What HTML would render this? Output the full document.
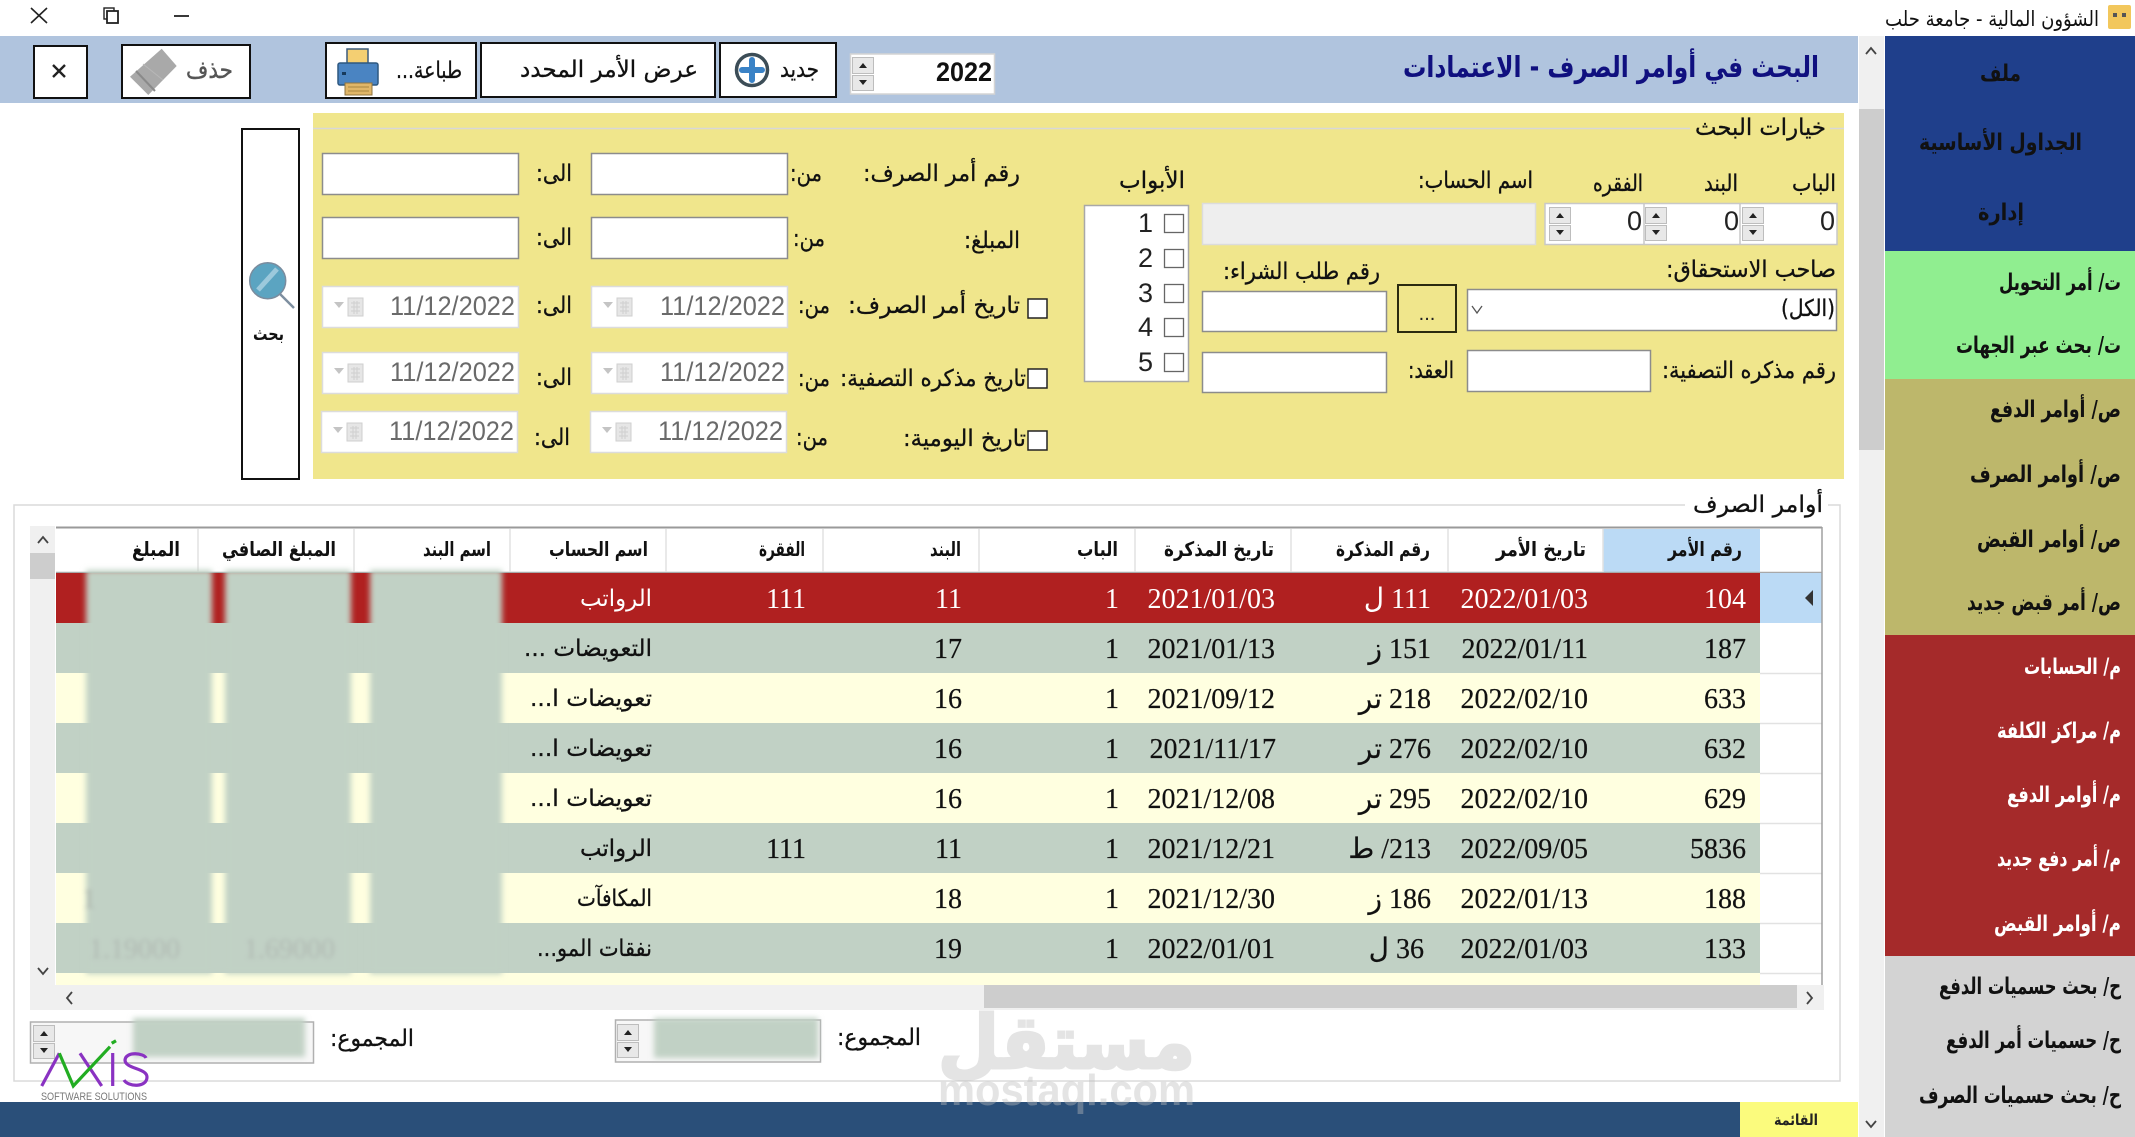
<!DOCTYPE html>
<html lang="ar">
<head>
<meta charset="utf-8">
<title>الشؤون المالية - جامعة حلب</title>
<style>
html,body{margin:0;padding:0;background:#fff;width:2135px;height:1137px;overflow:hidden}
svg{display:block;position:absolute;left:0;top:0}
text{direction:rtl;font-family:"DejaVu Sans",sans-serif;font-size:20px;fill:#111}
.h{font-weight:bold;font-size:20px;fill:#111}
.s{font-weight:bold;font-size:23px;fill:#111}
.w{font-weight:bold;font-size:22px;fill:#fff}
.n{font-family:"Liberation Serif","DejaVu Sans",serif;font-size:28px;fill:#111;stroke:#111;stroke-width:.2px}
.nw{font-family:"Liberation Serif","DejaVu Sans",serif;font-size:28px;fill:#fff}
.a{font-family:"Liberation Sans",sans-serif;font-size:27px;fill:#222}
.d{font-family:"Liberation Sans",sans-serif;font-size:27px;fill:#6a6a6a}
.c{font-size:23px;fill:#111;stroke:#111;stroke-width:.3px}
.cw{font-size:23px;fill:#fff}
</style>
</head>
<body>
<svg width="2135" height="1137" viewBox="0 0 2135 1137" xmlns="http://www.w3.org/2000/svg">
<defs>
<filter id="bl" x="-20%" y="-20%" width="140%" height="140%"><feGaussianBlur stdDeviation="3"/></filter>
<filter id="bl2" x="-20%" y="-20%" width="140%" height="140%"><feGaussianBlur stdDeviation="2"/></filter>
<symbol id="date" width="197" height="42" overflow="visible">
<rect x="0.5" y="0.5" width="196" height="41" fill="#fff" stroke="#dcdcdc" stroke-width="1.5"/>
<path d="M12 16h10l-5 6z" fill="#c4c4c4"/>
<rect x="26" y="12" width="15" height="18" fill="#e6e6e6" stroke="#cfcfcf"/>
<path d="M29 17h9M29 21h9M29 25h9M32 15v13M35 15v13" stroke="#cfcfcf" stroke-width="1"/>
</symbol>
<symbol id="spin" width="22" height="34" overflow="visible">
<rect x="0.5" y="0.5" width="21" height="16" fill="#e8e8e8" stroke="#bdbdbd"/>
<rect x="0.5" y="18.5" width="21" height="15" fill="#e8e8e8" stroke="#bdbdbd"/>
<path d="M7 11h8l-4-5z" fill="#222"/>
<path d="M7 23h8l-4 5z" fill="#222"/>
</symbol>
</defs>

<!-- title bar -->
<path d="M31 8l16 15M47 8L31 23" stroke="#222" stroke-width="1.6" fill="none"/>
<rect x="104" y="8" width="10" height="11" fill="#fff" stroke="#222" stroke-width="1.4"/>
<rect x="107" y="11" width="11" height="12" fill="#fff" stroke="#222" stroke-width="1.8"/>
<path d="M174 16h15" stroke="#222" stroke-width="1.8"/>
<rect x="2108" y="5" width="23" height="24" rx="2" fill="#f2c75c"/>
<rect x="2113" y="13" width="4" height="4" fill="#555"/><rect x="2122" y="13" width="4" height="4" fill="#555"/>
<text x="2099" y="26" textLength="214" lengthAdjust="spacingAndGlyphs" style="font-size:21px">الشؤون المالية - جامعة حلب</text>

<!-- header band -->
<rect x="0" y="36" width="1858" height="67" fill="#b0c4de"/>
<text x="1819" y="77" textLength="416" lengthAdjust="spacingAndGlyphs" style="font-size:29px;font-weight:bold;fill:#10107f">البحث في أوامر الصرف - الاعتمادات</text>

<!-- top buttons -->
<rect x="34" y="46" width="53" height="52" fill="#fff" stroke="#111" stroke-width="2"/>
<path d="M53 65l12 12M65 65L53 77" stroke="#222" stroke-width="2.4" fill="none"/>
<rect x="122" y="45" width="128" height="53" fill="#fff" stroke="#111" stroke-width="2"/>
<path d="M161.700 48.700L176.700 66L148.300 95L130 76.700Z" fill="#a9a9a9"/>
<path d="M136 71L155 91" stroke="#8a8a8a" stroke-width="2"/>
<path d="M143 64L163 80" stroke="#b8b8b8" stroke-width="1"/>
<text x="233" y="78" textLength="47" lengthAdjust="spacingAndGlyphs" style="font-size:24px;fill:#555;stroke:#555;stroke-width:.4px">حذف</text>

<rect x="326" y="43" width="150" height="55" fill="#fff" stroke="#111" stroke-width="2"/>
<rect x="347" y="49" width="21" height="18" fill="#f4cf72" stroke="#3c5b7d" stroke-width="1.5"/>
<rect x="338" y="63" width="40" height="22" rx="2" fill="#4a84c2" stroke="#2e5880" stroke-width="1.5"/>
<rect x="345" y="83" width="27" height="12" fill="#e0b668" stroke="#8f7440"/>
<path d="M348 87h21M348 91h21" stroke="#a8853f" stroke-width="1"/>
<rect x="342" y="72" width="4" height="3" fill="#173a5c"/>
<text x="462" y="78" textLength="66" lengthAdjust="spacingAndGlyphs" class="c">طباعة...</text>

<rect x="481" y="43" width="234" height="54" fill="#fff" stroke="#111" stroke-width="2"/>
<text x="698" y="77" textLength="178" lengthAdjust="spacingAndGlyphs" class="c">عرض الأمر المحدد</text>

<rect x="720" y="43" width="116" height="54" fill="#fff" stroke="#111" stroke-width="2"/>
<circle cx="752" cy="70" r="15.500" fill="#fff" stroke="#3c4d57" stroke-width="3.500"/>
<path d="M742 70h20M752 60v20" stroke="#3a82c6" stroke-width="6" stroke-linecap="round"/>
<text x="819" y="77" textLength="39" lengthAdjust="spacingAndGlyphs" class="c">جديد</text>

<rect x="850.500" y="54" width="144" height="40" fill="#fff" stroke="#d4d4d4" stroke-width="1.500"/>
<use href="#spin" x="852" y="57"/>
<text x="992" y="81" class="a" style="font-weight:bold;font-size:27px;fill:#111;direction:ltr" text-anchor="end" textLength="56" lengthAdjust="spacingAndGlyphs">2022</text>

<!-- main scrollbar -->
<rect x="1859" y="36" width="25" height="1101" fill="#f0f0f0"/>
<rect x="1859" y="109" width="25" height="341" fill="#cdcdcd"/>
<path d="M1866 54l5-6 5 6M1866 1121l5 6 5-6" stroke="#444" stroke-width="1.800" fill="none"/>

<!-- sidebar -->
<rect x="1885" y="36" width="250" height="215" fill="#1f3f8b"/>
<rect x="1885" y="251" width="250" height="128" fill="#90ee90"/>
<rect x="1885" y="379" width="250" height="256" fill="#bdb76b"/>
<rect x="1885" y="635" width="250" height="321" fill="#a52a2a"/>
<rect x="1885" y="956" width="250" height="181" fill="#d3d3d3"/>
<text x="2021" y="81" textLength="41" lengthAdjust="spacingAndGlyphs" class="s">ملف</text>
<text x="2082" y="150" textLength="163" lengthAdjust="spacingAndGlyphs" class="s">الجداول الأساسية</text>
<text x="2024" y="220" textLength="46" lengthAdjust="spacingAndGlyphs" class="s">إدارة</text>
<text x="2121" y="290" textLength="122" lengthAdjust="spacingAndGlyphs" class="s">ت/ أمر التحويل</text>
<text x="2121" y="353" textLength="165" lengthAdjust="spacingAndGlyphs" class="s">ت/ بحث عبر الجهات</text>
<text x="2121" y="417" textLength="131" lengthAdjust="spacingAndGlyphs" class="s">ص/ أوامر الدفع</text>
<text x="2121" y="482" textLength="151" lengthAdjust="spacingAndGlyphs" class="s">ص/ أوامر الصرف</text>
<text x="2121" y="547" textLength="144" lengthAdjust="spacingAndGlyphs" class="s">ص/ أوامر القبض</text>
<text x="2121" y="610" textLength="154" lengthAdjust="spacingAndGlyphs" class="s">ص/ أمر قبض جديد</text>
<text x="2121" y="674" textLength="97" lengthAdjust="spacingAndGlyphs" class="w">م/ الحسابات</text>
<text x="2121" y="738" textLength="124" lengthAdjust="spacingAndGlyphs" class="w">م/ مراكز الكلفة</text>
<text x="2121" y="802" textLength="114" lengthAdjust="spacingAndGlyphs" class="w">م/ أوامر الدفع</text>
<text x="2121" y="866" textLength="124" lengthAdjust="spacingAndGlyphs" class="w">م/ أمر دفع جديد</text>
<text x="2121" y="931" textLength="127" lengthAdjust="spacingAndGlyphs" class="w">م/ أوامر القبض</text>
<text x="2121" y="994" textLength="182" lengthAdjust="spacingAndGlyphs" class="s">ح/ بحث حسميات الدفع</text>
<text x="2121" y="1048" textLength="175" lengthAdjust="spacingAndGlyphs" class="s">ح/ حسميات أمر الدفع</text>
<text x="2121" y="1103" textLength="202" lengthAdjust="spacingAndGlyphs" class="s">ح/ بحث حسميات الصرف</text>

<!-- search button -->
<rect x="242" y="129" width="57" height="350" fill="#fff" stroke="#111" stroke-width="2"/>
<path d="M280 294L294 308" stroke="#7e8fa0" stroke-width="2.500"/>
<circle cx="267.700" cy="280.700" r="18" fill="#5ba4c1" stroke="#7a8c9e" stroke-width="1.500"/>
<path d="M258 290L277 269" stroke="#9cc9dc" stroke-width="5"/>
<text x="284" y="340" textLength="31" lengthAdjust="spacingAndGlyphs" style="font-size:18px;font-weight:bold;fill:#111">بحث</text>

<!-- search options panel -->
<rect x="313" y="113" width="1531" height="366" fill="#f0e68c"/>
<path d="M313 128.500H1690M1830 128.500H1844" stroke="#d8d8d8" stroke-width="1.500"/>
<text x="1826" y="135" textLength="131" lengthAdjust="spacingAndGlyphs" class="c">خيارات البحث</text>

<text x="1836" y="191" textLength="44" lengthAdjust="spacingAndGlyphs" class="c">الباب</text>
<text x="1738" y="191" textLength="34" lengthAdjust="spacingAndGlyphs" class="c">البند</text>
<text x="1643" y="191" textLength="50" lengthAdjust="spacingAndGlyphs" class="c">الفقره</text>
<text x="1533" y="188" textLength="115" lengthAdjust="spacingAndGlyphs" class="c">اسم الحساب:</text>
<text x="1185" y="188" textLength="66" lengthAdjust="spacingAndGlyphs" class="c">الأبواب</text>

<rect x="1545" y="203.500" width="292" height="41" fill="#fff" stroke="#c8c8c8" stroke-width="1.500"/>
<path d="M1644 204v40M1740 204v40" stroke="#c8c8c8" stroke-width="1.500"/>
<use href="#spin" x="1549" y="207"/><use href="#spin" x="1645" y="207"/><use href="#spin" x="1742" y="207"/>
<text x="1835" y="230" class="a">0</text><text x="1739" y="230" class="a">0</text><text x="1642" y="230" class="a">0</text>
<rect x="1202.500" y="203.500" width="333" height="41" fill="#eeeeee" stroke="#dcdcdc" stroke-width="1.500"/>

<rect x="1084.500" y="205.500" width="104" height="176" fill="#fff" stroke="#a8a8a8" stroke-width="1.500"/>
<g fill="#fff" stroke="#666" stroke-width="1.300">
<rect x="1164.500" y="214.500" width="19" height="18"/><rect x="1164.500" y="249.500" width="19" height="18"/><rect x="1164.500" y="284.500" width="19" height="18"/><rect x="1164.500" y="318.500" width="19" height="18"/><rect x="1164.500" y="353.500" width="19" height="18"/>
</g>
<text x="1153" y="232" class="a">1</text><text x="1153" y="267" class="a">2</text><text x="1153" y="302" class="a">3</text><text x="1153" y="336" class="a">4</text><text x="1153" y="371" class="a">5</text>

<text x="1836" y="277" textLength="170" lengthAdjust="spacingAndGlyphs" class="c">صاحب الاستحقاق:</text>
<text x="1380" y="279" textLength="157" lengthAdjust="spacingAndGlyphs" class="c">رقم طلب الشراء:</text>
<rect x="1467.500" y="289.500" width="369" height="41" fill="#fff" stroke="#8c8c8c" stroke-width="1.500"/>
<text x="1835" y="316" textLength="54" lengthAdjust="spacingAndGlyphs" class="c">(الكل)</text>
<path d="M1472 306l5 7 5-7" stroke="#555" stroke-width="1.300" fill="none"/>
<rect x="1398" y="285" width="58" height="47" fill="#f0e68c" stroke="#2b2b10" stroke-width="2"/>
<text x="1427" y="320" text-anchor="middle" style="font-family:'Liberation Sans',sans-serif;font-size:20px;direction:ltr;fill:#222">...</text>
<rect x="1202.500" y="291.500" width="184" height="40" fill="#fff" stroke="#8c8c8c" stroke-width="1.500"/>

<text x="1836" y="378" textLength="174" lengthAdjust="spacingAndGlyphs" class="c">رقم مذكره التصفية:</text>
<rect x="1467.500" y="350.500" width="183" height="41" fill="#fff" stroke="#8c8c8c" stroke-width="1.500"/>
<text x="1454" y="378" textLength="46" lengthAdjust="spacingAndGlyphs" class="c">العقد:</text>
<rect x="1202.500" y="352.500" width="184" height="40" fill="#fff" stroke="#8c8c8c" stroke-width="1.500"/>

<!-- left side of filter -->
<g fill="#fff" stroke="#8c8c8c" stroke-width="1.500">
<rect x="322.500" y="153.500" width="196" height="41"/><rect x="591.500" y="153.500" width="196" height="41"/>
<rect x="322.500" y="217.500" width="196" height="41"/><rect x="591.500" y="217.500" width="196" height="41"/>
</g>
<text x="1020" y="181" textLength="157" lengthAdjust="spacingAndGlyphs" class="c">رقم أمر الصرف:</text>
<text x="822" y="181" textLength="32" lengthAdjust="spacingAndGlyphs" class="c">من:</text>
<text x="572" y="181" textLength="36" lengthAdjust="spacingAndGlyphs" class="c">الى:</text>
<text x="1020" y="248" textLength="56" lengthAdjust="spacingAndGlyphs" class="c">المبلغ:</text>
<text x="825" y="246" textLength="32" lengthAdjust="spacingAndGlyphs" class="c">من:</text>
<text x="572" y="245" textLength="36" lengthAdjust="spacingAndGlyphs" class="c">الى:</text>

<use href="#date" x="322" y="286"/><use href="#date" x="591" y="286"/>
<use href="#date" x="322" y="352"/><use href="#date" x="591" y="352"/>
<use href="#date" x="321" y="411"/><use href="#date" x="590" y="411"/>
<text x="515" y="315" class="d" textLength="125" lengthAdjust="spacingAndGlyphs">11/12/2022</text><text x="785" y="315" class="d" textLength="125" lengthAdjust="spacingAndGlyphs">11/12/2022</text>
<text x="515" y="381" class="d" textLength="125" lengthAdjust="spacingAndGlyphs">11/12/2022</text><text x="785" y="381" class="d" textLength="125" lengthAdjust="spacingAndGlyphs">11/12/2022</text>
<text x="514" y="440" class="d" textLength="125" lengthAdjust="spacingAndGlyphs">11/12/2022</text><text x="783" y="440" class="d" textLength="125" lengthAdjust="spacingAndGlyphs">11/12/2022</text>

<g fill="#fff" stroke="#222" stroke-width="1.500">
<rect x="1028" y="299" width="19" height="19"/><rect x="1028" y="369" width="19" height="19"/><rect x="1028" y="431" width="19" height="19"/>
</g>
<text x="1020" y="313" textLength="172" lengthAdjust="spacingAndGlyphs" class="c">تاريخ أمر الصرف:</text>
<text x="830" y="313" textLength="32" lengthAdjust="spacingAndGlyphs" class="c">من:</text>
<text x="572" y="313" textLength="36" lengthAdjust="spacingAndGlyphs" class="c">الى:</text>
<text x="1026" y="386" textLength="186" lengthAdjust="spacingAndGlyphs" class="c">تاريخ مذكره التصفية:</text>
<text x="830" y="386" textLength="32" lengthAdjust="spacingAndGlyphs" class="c">من:</text>
<text x="572" y="385" textLength="36" lengthAdjust="spacingAndGlyphs" class="c">الى:</text>
<text x="1026" y="446" textLength="123" lengthAdjust="spacingAndGlyphs" class="c">تاريخ اليومية:</text>
<text x="828" y="445" textLength="32" lengthAdjust="spacingAndGlyphs" class="c">من:</text>
<text x="570" y="445" textLength="36" lengthAdjust="spacingAndGlyphs" class="c">الى:</text>

<!-- orders group -->
<rect x="14" y="505" width="1826" height="576" fill="#fff" stroke="#dadada" stroke-width="1.500"/>
<rect x="1685" y="498" width="143" height="14" fill="#fff"/>
<text x="1823" y="512" textLength="130" lengthAdjust="spacingAndGlyphs" class="c">أوامر الصرف</text>

<!-- grid -->
<rect x="56" y="527" width="1766" height="458" fill="#fff"/>
<rect x="1603" y="529" width="157" height="43" fill="#bbdaf5"/>
<path d="M56 527.500H1822" stroke="#9a9a9a" stroke-width="2"/>
<path d="M56 572.500H1822" stroke="#a8a8a8" stroke-width="1.500"/>
<path d="M198 529v43M354 529v43M510 529v43M666 529v43M823 529v43M979 529v43M1135 529v43M1291 529v43M1448 529v43M1603 529v43" stroke="#e2e2e2" stroke-width="1.500"/>
<rect x="56" y="573" width="1704" height="50" fill="#b02020"/>
<rect x="56" y="623" width="1704" height="50" fill="#c1d1c5"/>
<rect x="56" y="673" width="1704" height="50" fill="#ffffe0"/>
<rect x="56" y="723" width="1704" height="50" fill="#c1d1c5"/>
<rect x="56" y="773" width="1704" height="50" fill="#ffffe0"/>
<rect x="56" y="823" width="1704" height="50" fill="#c1d1c5"/>
<rect x="56" y="873" width="1704" height="50" fill="#ffffe0"/>
<rect x="56" y="923" width="1704" height="50" fill="#c1d1c5"/>
<rect x="56" y="973" width="1704" height="12" fill="#ffffe0"/>
<rect x="1760" y="573" width="62" height="50" fill="#bbdaf5"/>
<path d="M1813 590v16l-8-8z" fill="#333"/>
<path d="M1760 673.500h62M1760 723.500h62M1760 773.500h62M1760 823.500h62M1760 873.500h62M1760 923.500h62M1760 973.500h62" stroke="#e2e2e2" stroke-width="1.500"/>
<path d="M1822 527V985" stroke="#a0a0a0" stroke-width="1.500"/>

<!-- headers -->
<text x="1742" y="556" textLength="74" lengthAdjust="spacingAndGlyphs" class="h">رقم الأمر</text>
<text x="1586" y="556" textLength="90" lengthAdjust="spacingAndGlyphs" class="h">تاريخ الأمر</text>
<text x="1430" y="556" textLength="94" lengthAdjust="spacingAndGlyphs" class="h">رقم المذكرة</text>
<text x="1274" y="556" textLength="110" lengthAdjust="spacingAndGlyphs" class="h">تاريخ المذكرة</text>
<text x="1118" y="556" textLength="41" lengthAdjust="spacingAndGlyphs" class="h">الباب</text>
<text x="961" y="556" textLength="31" lengthAdjust="spacingAndGlyphs" class="h">البند</text>
<text x="805" y="556" textLength="46" lengthAdjust="spacingAndGlyphs" class="h">الفقرة</text>
<text x="648" y="556" textLength="99" lengthAdjust="spacingAndGlyphs" class="h">اسم الحساب</text>
<text x="491" y="556" textLength="68" lengthAdjust="spacingAndGlyphs" class="h">اسم البند</text>
<text x="336" y="556" textLength="114" lengthAdjust="spacingAndGlyphs" class="h">المبلغ الصافي</text>
<text x="180" y="556" textLength="48" lengthAdjust="spacingAndGlyphs" class="h">المبلغ</text>

<!-- rows -->
<text x="1746" y="608" class="nw">104</text><text x="1588" y="608" class="nw">2022/01/03</text><text x="1431" y="608" class="nw">111 ل</text><text x="1275" y="608" class="nw">2021/01/03</text><text x="1119" y="608" class="nw">1</text><text x="962" y="608" class="nw">11</text><text x="806" y="608" class="nw">111</text>
<text x="652" y="606" textLength="72" lengthAdjust="spacingAndGlyphs" class="cw">الرواتب</text>

<text x="1746" y="658" class="n">187</text><text x="1588" y="658" class="n">2022/01/11</text><text x="1431" y="658" class="n">151 ز</text><text x="1275" y="658" class="n">2021/01/13</text><text x="1119" y="658" class="n">1</text><text x="962" y="658" class="n">17</text>
<text x="652" y="656" textLength="128" lengthAdjust="spacingAndGlyphs" class="c">التعويضات ...</text>

<text x="1746" y="708" class="n">633</text><text x="1588" y="708" class="n">2022/02/10</text><text x="1431" y="708" class="n">218 تر</text><text x="1275" y="708" class="n">2021/09/12</text><text x="1119" y="708" class="n">1</text><text x="962" y="708" class="n">16</text>
<text x="652" y="706" textLength="122" lengthAdjust="spacingAndGlyphs" class="c">تعويضات ا...</text>

<text x="1746" y="758" class="n">632</text><text x="1588" y="758" class="n">2022/02/10</text><text x="1431" y="758" class="n">276 تر</text><text x="1276" y="758" class="n">2021/11/17</text><text x="1119" y="758" class="n">1</text><text x="962" y="758" class="n">16</text>
<text x="652" y="756" textLength="122" lengthAdjust="spacingAndGlyphs" class="c">تعويضات ا...</text>

<text x="1746" y="808" class="n">629</text><text x="1588" y="808" class="n">2022/02/10</text><text x="1431" y="808" class="n">295 تر</text><text x="1275" y="808" class="n">2021/12/08</text><text x="1119" y="808" class="n">1</text><text x="962" y="808" class="n">16</text>
<text x="652" y="806" textLength="122" lengthAdjust="spacingAndGlyphs" class="c">تعويضات ا...</text>

<text x="1746" y="858" class="n">5836</text><text x="1588" y="858" class="n">2022/09/05</text><text x="1431" y="858" class="n">213/ ط</text><text x="1275" y="858" class="n">2021/12/21</text><text x="1119" y="858" class="n">1</text><text x="962" y="858" class="n">11</text><text x="806" y="858" class="n">111</text>
<text x="652" y="856" textLength="72" lengthAdjust="spacingAndGlyphs" class="c">الرواتب</text>

<text x="1746" y="908" class="n">188</text><text x="1588" y="908" class="n">2022/01/13</text><text x="1431" y="908" class="n">186 ز</text><text x="1275" y="908" class="n">2021/12/30</text><text x="1119" y="908" class="n">1</text><text x="962" y="908" class="n">18</text>
<text x="652" y="906" textLength="75" lengthAdjust="spacingAndGlyphs" class="c">المكافآت</text>

<text x="1746" y="958" class="n">133</text><text x="1588" y="958" class="n">2022/01/03</text><text x="1424" y="958" class="n">36 ل</text><text x="1275" y="958" class="n">2022/01/01</text><text x="1119" y="958" class="n">1</text><text x="962" y="958" class="n">19</text>
<text x="652" y="956" textLength="115" lengthAdjust="spacingAndGlyphs" class="c">نفقات المو...</text>

<!-- redaction blur -->
<g fill="#c1d1c5" filter="url(#bl)">
<rect x="86" y="570" width="126" height="404"/>
<rect x="225" y="570" width="126" height="404"/>
<rect x="370" y="570" width="132" height="404"/>
</g>
<g filter="url(#bl2)" opacity=".4">
<text x="96" y="908" style="font-family:'Liberation Serif',serif;font-size:28px;fill:#888">1</text>
<text x="180" y="958" style="font-family:'Liberation Serif',serif;font-size:28px;fill:#999">1.19000</text>
<text x="335" y="958" style="font-family:'Liberation Serif',serif;font-size:28px;fill:#999">1.69000</text>
</g>

<!-- grid scrollbars -->
<rect x="30" y="526" width="25" height="459" fill="#f0f0f0"/>
<rect x="30" y="553" width="25" height="26" fill="#cdcdcd"/>
<path d="M38 543l5-6 5 6M38 968l5 6 5-6" stroke="#444" stroke-width="1.800" fill="none"/>
<rect x="30" y="985" width="1794" height="25" fill="#f0f0f0"/>
<rect x="984" y="985" width="813" height="23" fill="#cdcdcd"/>
<path d="M72 992l-5 6 5 6M1807 992l5 6-5 6" stroke="#444" stroke-width="1.800" fill="none"/>

<!-- totals -->
<rect x="30.500" y="1022" width="283" height="41" fill="#f7f7f7" stroke="#b0b0b0" stroke-width="1.500"/>
<use href="#spin" x="33" y="1025"/>
<rect x="133" y="1018" width="172" height="39" fill="#c1d1c5" filter="url(#bl)"/>
<text x="414" y="1046" textLength="84" lengthAdjust="spacingAndGlyphs" class="c">المجموع:</text>
<rect x="615.500" y="1020" width="205" height="42" fill="#f7f7f7" stroke="#b0b0b0" stroke-width="1.500"/>
<use href="#spin" x="617" y="1024"/>
<rect x="654" y="1018" width="164" height="40" fill="#c1d1c5" filter="url(#bl)"/>
<text x="921" y="1045" textLength="84" lengthAdjust="spacingAndGlyphs" class="c">المجموع:</text>

<!-- bottom bar -->
<rect x="0" y="1102" width="1740" height="35" fill="#2a4f79"/>
<rect x="1740" y="1102" width="118" height="35" fill="#fbfb7d"/>
<text x="1818" y="1125" textLength="44" lengthAdjust="spacingAndGlyphs" style="font-size:15px;font-weight:bold;fill:#222">القائمة</text>

<!-- axis logo -->
<g fill="none" stroke-width="3.200">
<path d="M41.700 1086L59.300 1053.300" stroke="#8a32c2"/>
<path d="M80 1053.300L101.700 1086" stroke="#8a32c2"/>
<path d="M59.300 1053.300L73.300 1086L110 1046.700" stroke="#22ad22"/>
<path d="M111.700 1043.300L116 1040.700" stroke="#22ad22"/>
<path d="M112.700 1053V1086" stroke="#8a32c2"/>
<path d="M146 1058C144 1053 126 1051 125 1060C125 1069 147 1068 147 1077C147 1088 128 1087 124 1080" stroke="#8a32c2"/>
</g>
<text x="41" y="1100" textLength="106" lengthAdjust="spacingAndGlyphs" text-anchor="start" style="direction:ltr;font-family:'Liberation Sans',sans-serif;font-size:11px;fill:#777">SOFTWARE SOLUTIONS</text>

<!-- watermark -->
<g opacity=".4">
<text x="1195" y="1068" textLength="257" lengthAdjust="spacingAndGlyphs" style="font-size:74px;font-weight:bold;fill:#bebebe;stroke:#bebebe;stroke-width:3px">مستقل</text>
<text x="938" y="1105" textLength="257" lengthAdjust="spacingAndGlyphs" style="direction:ltr;font-family:'Liberation Sans',sans-serif;font-size:44px;font-weight:bold;fill:#bebebe">mostaql.com</text>
</g>
</svg>
</body>
</html>
